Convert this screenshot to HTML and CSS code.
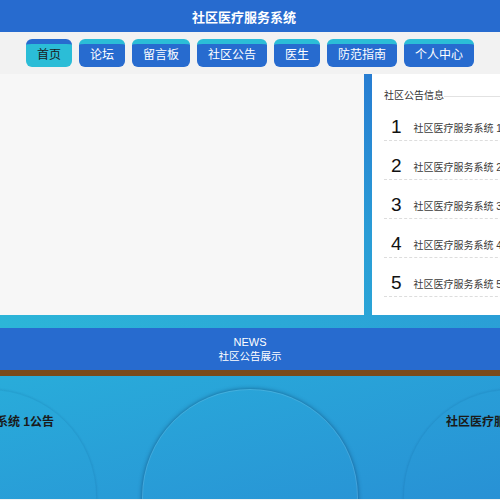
FILE: index.html
```html
<!DOCTYPE html>
<html>
  <head>
    <meta charset="UTF-8">
    <title>社区医疗服务系统</title>
    <link rel="stylesheet" href="styles.css">
  </head>
  <body>
    <header class="top-bar">
      <h1 class="site-title">社区医疗服务系统</h1>
    </header>

    <nav class="main-nav">
      <a class="nav-btn active" href="#">首页</a>
      <a class="nav-btn" href="#">论坛</a>
      <a class="nav-btn" href="#">留言板</a>
      <a class="nav-btn" href="#">社区公告</a>
      <a class="nav-btn" href="#">医生</a>
      <a class="nav-btn" href="#">防范指南</a>
      <a class="nav-btn" href="#">个人中心</a>
    </nav>

    <section class="home-main">
      <div class="banner-box"></div>
      <aside class="notice-panel">
        <div class="notice-head"><span>社区公告信息</span></div>
        <ul class="notice-list">
          <li><span class="notice-no">1</span><span class="notice-text">社区医疗服务系统 1公告</span></li>
          <li><span class="notice-no">2</span><span class="notice-text">社区医疗服务系统 2公告</span></li>
          <li><span class="notice-no">3</span><span class="notice-text">社区医疗服务系统 3公告</span></li>
          <li><span class="notice-no">4</span><span class="notice-text">社区医疗服务系统 4公告</span></li>
          <li><span class="notice-no">5</span><span class="notice-text">社区医疗服务系统 5公告</span></li>
        </ul>
      </aside>
    </section>

    <div class="news-bar">
      <p class="news-en">NEWS</p>
      <p class="news-cn">社区公告展示</p>
    </div>

    <section class="news-show">
      <div class="news-circle side"><p>社区医疗服务系统 1公告</p></div>
      <div class="news-circle current"></div>
      <div class="news-circle side"><p>社区医疗服务系统 1公告</p></div>
    </section>
  </body>
</html>
```

FILE: styles.css
```css
    body {
      margin: 0;
      padding: 0;
      width: 500px;
      overflow: hidden;
      font-family: "Liberation Sans", "Noto Sans CJK SC", sans-serif;
      background: #f2f2f2;
    }
    .top-bar {
      height: 32px;
      background-color: #276bcf;
      display: flex;
      align-items: center;
      justify-content: center;
      padding-right: 12px;
    }
    .site-title {
      margin: 0;
      color: white;
      font-size: 13px;
      font-weight: bold;
    }
    .main-nav {
      display: flex;
      justify-content: center;
      gap: 7px;
      padding: 7px 0;
      background: #f2f2f2;
    }
    .nav-btn {
      height: 23px;
      line-height: 23px;
      padding: 0 11px;
      border-top: 5px solid #2bbdd7;
      border-radius: 6px;
      background-color: #276bcf;
      color: white;
      font-size: 12px;
      text-decoration: none;
    }
    .nav-btn.active {
      border-top-color: #276bcf;
      background-color: #2bbdd7;
      color: #1b1b1b;
    }
    .home-main {
      display: flex;
      gap: 8px;
      height: 241px;
      padding-bottom: 13px;
      overflow: hidden;
      background: linear-gradient(to top right, #2cb6d8, #2a9dd6 55%, #2770d0);
    }
    .banner-box {
      width: 364px;
      flex-shrink: 0;
      background: #f7f7f7;
    }
    .notice-panel {
      width: 260px;
      flex-shrink: 0;
      padding: 16px 0 0 12px;
      background: white;
    }
    .notice-head {
      display: flex;
      align-items: center;
      font-size: 10px;
      line-height: 12px;
      color: #333;
    }
    .notice-head::after {
      content: "";
      flex: 1;
      height: 1px;
      background: #e2e2e2;
    }
    .notice-list {
      list-style: none;
      margin: 0;
      padding: 0;
    }
    .notice-list li {
      display: flex;
      align-items: center;
      height: 18px;
      padding: 16px 0 4px 7px;
      border-bottom: 1px dashed #dddddd;
      white-space: nowrap;
    }
    .notice-no {
      margin-right: 12px;
      font-size: 19px;
      color: #111;
    }
    .notice-text {
      font-size: 10px;
      color: #3a3a3a;
    }
    .news-bar {
      height: 42px;
      background-color: #276bcf;
      border-bottom: 6px solid #7a4a1b;
      color: white;
      text-align: center;
    }
    .news-bar p {
      margin: 0;
      line-height: 14px;
    }
    .news-en {
      padding-top: 7px;
      font-size: 11px;
    }
    .news-cn {
      font-size: 10.5px;
    }
    .news-show {
      display: flex;
      justify-content: center;
      gap: 45px;
      height: 110px;
      padding-top: 13px;
      overflow: hidden;
      background: linear-gradient(to bottom right, #29acda, #2891d5);
    }
    .news-circle {
      width: 216px;
      height: 216px;
      flex-shrink: 0;
      box-sizing: border-box;
      border-radius: 50%;
      text-align: center;
    }
    .news-circle.side {
      border: 1px solid rgba(0, 60, 110, 0.08);
      box-shadow: 0 0 2px rgba(0, 50, 100, 0.15);
    }
    .news-circle.current {
      border: 1px solid rgba(255, 255, 255, 0.12);
      box-shadow: 0 0 4px rgba(0, 35, 75, 0.5);
    }
    .news-circle p {
      margin: 0;
      padding-top: 24px;
      line-height: 16px;
      font-size: 12px;
      font-weight: bold;
      color: #1a1a1a;
      white-space: nowrap;
    }
```
